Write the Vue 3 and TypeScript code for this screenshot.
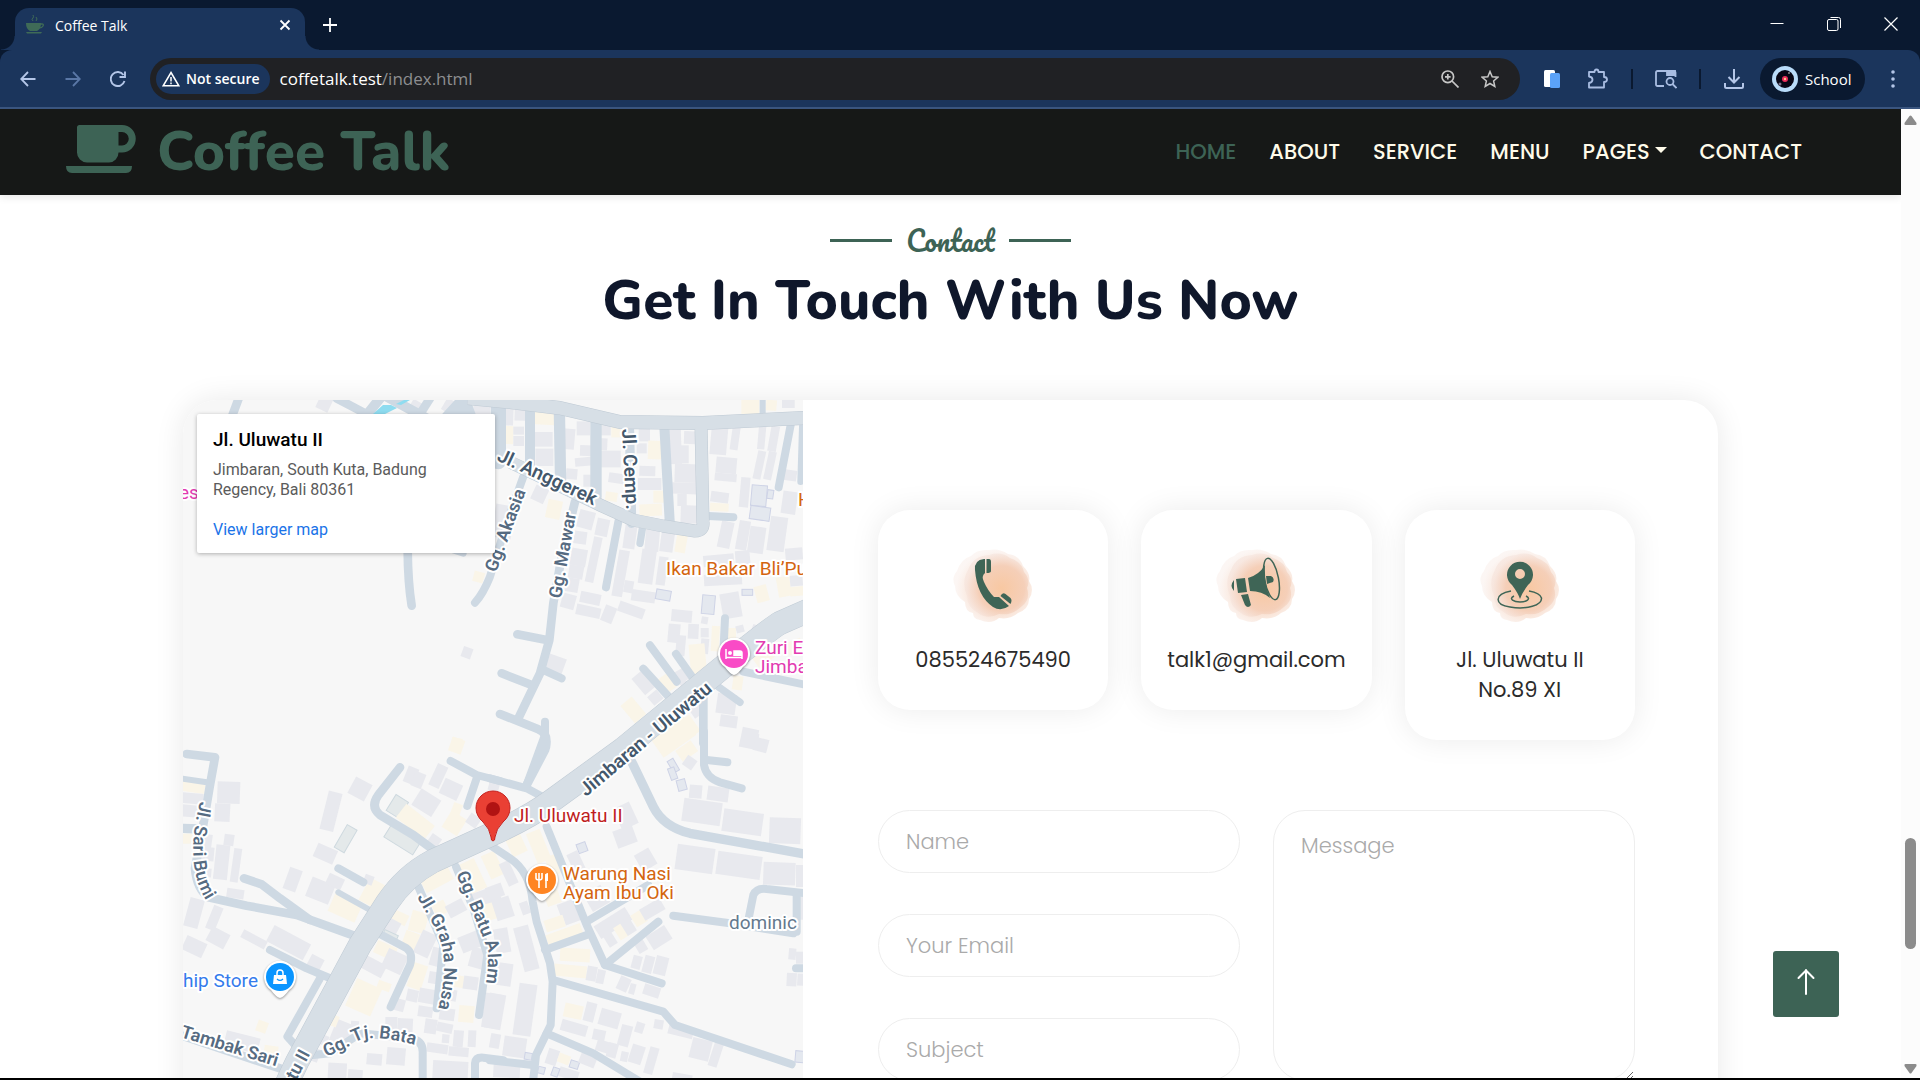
<script setup lang="ts">
import { ref } from 'vue'

type Building = [x: number, y: number, w: number, h: number, turn: number, kind?: 'shop' | 'pool' | 'park']
type Road = [d: string, width: number]
interface Tile { x: number; y: number; buildings: Building[]; roads: Road[] }

const navLinks = ['HOME', 'ABOUT', 'SERVICE', 'MENU', 'PAGES', 'CONTACT']
const contacts = [
  { icon: 'phone', text: '085524675490' },
  { icon: 'horn', text: 'talk1@gmail.com' },
  { icon: 'place', text: 'Jl. Uluwatu II No.89 XI' },
]
const form = ref({ name: '', email: '', subject: '', message: '' })

// Map geometry is kept per tile; three tile units make one map unit.
const tiles: Tile[] = [
  {
    x: -3, y: -10,
    buildings: [
      [415, 10, 40, 52, 25], [690, 34, 40, 34, 30], [880, 34, 50, 44, 0], [846, 772, 30, 32, 20], [880, 545, 32, 32, 15, 'shop'],
      [940, 345, 60, 100, 10], [815, 1044, 32, 20, 10, 'shop'], [790, 30, 40, 40, 30],
    ],
    roads: [
      ['M178 20L150 95', 26], ['M683 480Q684 580 695 647', 26], ['M470 25L565 75', 26], ['M560 75L600 25', 30], ['M620 20L740 85', 30],
      ['M750 25L715 80', 26], ['M800 90L850 35L870 90', 44], ['M820 480L850 490', 20],
    ],
  },
  {
    x: 307, y: -10,
    buildings: [
      [36, 48, 34, 58, 2], [74, 50, 32, 42, 2], [38, 108, 32, 54, 2, 'shop'], [70, 110, 32, 24, 0], [70, 138, 32, 30, 0],
      [124, 54, 72, 50, 3, 'shop'], [132, 126, 56, 44, 0], [136, 176, 54, 52, 0], [216, 116, 38, 62, 5], [260, 94, 40, 42, 0],
      [270, 166, 42, 32, 2], [255, 202, 56, 26, -5], [228, 236, 34, 32, 5], [280, 254, 28, 36, 0], [322, 100, 40, 36, 0],
      [364, 106, 40, 36, 0, 'shop'], [322, 145, 30, 36, 3], [332, 182, 60, 50, 0], [356, 250, 50, 30, 8], [346, 306, 36, 28, 8, 'shop'],
      [446, 106, 34, 48, 0], [474, 152, 40, 56, 2, 'shop'], [440, 160, 30, 30, 0], [448, 228, 48, 30, 2], [444, 264, 70, 36, 0],
      [490, 302, 40, 36, 0, 'shop'], [448, 342, 68, 36, -2, 'shop'], [538, 108, 36, 114, -2], [582, 124, 38, 38, 2], [570, 166, 26, 54, 0],
      [554, 222, 70, 56, 2], [546, 278, 76, 34, 2], [572, 346, 56, 54, 2], [562, 312, 28, 36, 0],
      [662, 102, 50, 92, 5], [724, 102, 24, 78, 8], [678, 202, 62, 48, 5], [674, 250, 66, 24, 5], [662, 306, 54, 32, 8],
      [660, 340, 56, 24, 3, 'shop'], [754, 30, 54, 50, 0, 'shop'], [828, 30, 32, 32, 5, 'shop'], [876, 30, 38, 24, 0],
      [804, 108, 22, 70, 5], [838, 108, 26, 76, 10], [796, 182, 24, 86, 12], [828, 184, 24, 86, 12], [750, 262, 28, 90, 5],
      [784, 286, 46, 62, 5, 'pool'], [780, 350, 60, 40, 8, 'pool'], [832, 300, 18, 26, 8, 'pool'], [876, 304, 44, 68, 8], [880, 240, 40, 32, 8],
      [836, 380, 52, 104, 8], [688, 394, 38, 80, 12], [742, 392, 34, 88, 10], [776, 410, 48, 80, 8], [886, 474, 52, 36, -5],
      [128, 290, 42, 46, 25], [170, 330, 44, 56, 12, 'shop'], [264, 362, 48, 54, 15], [318, 386, 38, 52, 12], [252, 424, 38, 38, 8],
      [242, 476, 48, 52, 10], [236, 526, 44, 40, 10], [298, 440, 26, 138, 12], [226, 564, 40, 42, 10], [214, 612, 42, 44, 15],
      [270, 608, 62, 34, 12], [258, 648, 74, 32, 12], [338, 648, 36, 50, 22], [384, 644, 80, 32, 20], [402, 402, 36, 74, 8],
      [376, 480, 32, 140, 10], [402, 572, 28, 36, 10], [424, 602, 72, 34, 8], [466, 408, 42, 76, 5], [450, 478, 44, 104, 8],
      [512, 416, 40, 70, 8], [502, 500, 28, 86, 8], [558, 424, 32, 64, 10, 'shop'], [640, 494, 92, 34, -5], [642, 552, 114, 34, -3],
      [736, 482, 44, 44, -5], [498, 600, 44, 30, 10, 'pool'], [636, 616, 38, 56, 5, 'pool'], [756, 598, 32, 18, 0, 'pool'], [694, 608, 58, 76, -10],
      [796, 586, 38, 50, -15, 'shop'], [862, 560, 40, 60, -10, 'shop'], [900, 556, 38, 32, -5], [900, 590, 40, 28, -5, 'shop'],
      [544, 660, 62, 36, 5], [534, 702, 36, 56, 5], [594, 702, 32, 44, 3], [558, 736, 28, 62, 5], [634, 680, 20, 22, 10],
      [632, 714, 24, 28, 0], [632, 746, 24, 46, 5], [664, 708, 24, 76, 3, 'shop'], [710, 714, 28, 50, 0, 'shop'], [738, 706, 24, 22, -15],
      [784, 708, 40, 30, 20], [600, 762, 48, 104, -5, 'shop'], [440, 846, 42, 64, -40], [478, 906, 36, 34, -40], [514, 854, 36, 50, -35, 'shop'],
      [556, 838, 38, 38, -30], [572, 872, 22, 22, -35], [408, 926, 44, 68, -40, 'shop'], [170, 798, 54, 48, 20], [728, 858, 30, 42, 8, 'shop'],
      [680, 912, 58, 60, 8], [690, 976, 52, 36, 8], [560, 985, 60, 60, -35, 'shop'], [790, 780, 60, 40, -35, 'shop'], [756, 1028, 50, 30, 10],
      [890, 750, 48, 40, -20, 'shop'], [602, 944, 32, 36, -35],
    ],
    roads: [
      ['M25 20V215', 46], ['M120 45V235', 30], ['M208 55L212 290', 34], ['M318 85V320', 34], ['M418 100L425 400', 28],
      ['M523 110L540 410', 30], ['M100 260L50 400L0 560Q-20 610 -45 638', 24], ['M255 335L215 500L190 640L178 750L150 850L85 985', 26],
      ['M82 733L170 750', 26], ['M35 850L125 885', 26], ['M160 840L215 865', 24], ['M30 972L145 1018Q175 1028 168 1070L165 1080L110 1185', 26],
      ['M385 395L348 592', 24], ['M458 410L450 460', 22], ['M655 378L730 382', 24], ['M902 105L866 292', 24], ['M937 110L932 275', 20], ['M818 30V75', 18],
      ['M705 685L700 790', 24], ['M480 766L560 875', 24], ['M460 836L545 930', 24], ['M558 792L620 880', 24], ['M760 845L950 885', 24],
      ['M640 920V1060', 26], ['M685 890L750 937', 22],
    ],
  },
  {
    x: -3, y: 335,
    buildings: [
      [0, 142, 75, 30, 8, 'shop'], [0, 174, 70, 32, 5], [0, 210, 60, 36, 5], [0, 296, 40, 30, 0, 'shop'], [112, 140, 68, 66, 2],
      [104, 206, 46, 54, 3], [70, 298, 26, 40, 8], [60, 336, 42, 42, 5], [104, 330, 42, 104, 6], [132, 298, 30, 34, 8], [156, 340, 24, 102, 8],
      [66, 400, 28, 26, 5], [140, 462, 52, 28, 8], [20, 490, 44, 88, 15], [88, 512, 30, 74, 22], [84, 584, 60, 48, 28], [10, 612, 66, 46, 25],
      [432, 170, 42, 118, 14], [512, 134, 56, 56, 28], [480, 272, 34, 78, 30, 'park'], [404, 334, 64, 44, 24], [318, 400, 40, 68, 20],
      [384, 436, 74, 62, 22], [440, 422, 50, 36, 25], [452, 484, 88, 64, 24, 'shop'], [550, 436, 56, 76, 28, 'shop'], [552, 420, 28, 28, 20],
      [676, 96, 34, 50, 22], [698, 112, 34, 46, 22], [758, 88, 34, 70, 25], [784, 138, 58, 50, 25], [704, 174, 70, 58, 32], [810, 10, 40, 44, 20, 'shop'],
      [630, 186, 44, 56, 32, 'park'], [616, 290, 102, 46, 32, 'park'], [652, 234, 108, 52, 38, 'shop'], [796, 236, 54, 58, 32, 'shop'], [816, 205, 28, 36, 20, 'shop'],
      [744, 300, 34, 40, 35], [862, 240, 36, 34, 35], [926, 138, 32, 30, 15], [182, 600, 80, 26, 28], [264, 596, 124, 54, 28], [386, 664, 42, 36, 28],
      [724, 408, 92, 48, -28, 'shop'], [850, 376, 54, 96, -25, 'shop'], [916, 352, 44, 76, -25, 'shop'], [622, 528, 62, 34, 25, 'shop'], [608, 552, 50, 40, 28],
      [608, 592, 44, 24, 25, 'park'], [584, 626, 64, 40, 24, 'shop'], [546, 674, 70, 42, 28], [612, 650, 64, 60, 25], [510, 742, 82, 90, 24, 'shop'],
      [592, 740, 40, 26, 20, 'shop'], [690, 530, 50, 62, 15, 'shop'], [670, 590, 44, 50, 20, 'shop'], [712, 590, 48, 74, 25], [690, 686, 44, 76, 18, 'shop'],
      [760, 500, 40, 40, -25, 'shop'], [800, 500, 56, 40, -28], [870, 464, 90, 46, -20], [900, 506, 50, 50, -15, 'shop'], [838, 592, 80, 50, -22],
      [870, 640, 50, 60, 15], [752, 640, 48, 56, 15], [746, 712, 50, 36, 10], [806, 720, 46, 36, 10, 'shop'], [850, 724, 44, 40, 8], [680, 764, 34, 36, 12],
      [716, 762, 58, 44, 10], [780, 762, 50, 34, 10], [642, 792, 32, 36, 15], [714, 814, 44, 32, 8], [836, 812, 46, 50, 5, 'shop'], [778, 820, 46, 36, 8],
      [920, 776, 50, 106, 10], [616, 846, 36, 44, 0], [652, 850, 46, 62, 3], [734, 852, 36, 44, 8], [770, 864, 48, 28, 12], [820, 886, 30, 50, 5],
      [864, 886, 24, 50, 3], [786, 898, 22, 26, 5], [740, 926, 64, 28, 8], [806, 936, 60, 28, 5], [758, 978, 106, 60, 3], [456, 860, 60, 74, 22],
      [416, 900, 28, 30, 22], [448, 840, 26, 34, 22, 'shop'], [392, 940, 26, 40, 20], [560, 956, 46, 34, 5], [620, 938, 56, 52, 5], [444, 984, 56, 50, 3],
      [504, 1004, 44, 28, 5], [134, 898, 104, 46, 14], [230, 858, 32, 34, 20, 'shop'], [252, 932, 42, 32, 8, 'shop'], [512, 858, 24, 36, 5],
    ],
    roads: [
      ['M20 57L105 67L90 150L68 280L45 400Q50 460 85 487L200 512L350 540L420 565L530 605', 26], ['M0 130L80 142', 18], ['M0 280L60 282', 28],
      ['M192 430L245 448L300 490L390 555', 26], ['M660 97L595 180Q570 215 600 240L700 300L770 352', 26], ['M475 400L550 442', 24], ['M475 472L570 525', 18],
      ['M270 645L380 700L470 738', 24], ['M420 730L322 905L345 930', 24], ['M595 595L680 640Q700 655 690 690L632 816', 24],
      ['M812 78L890 120L960 138', 24], ['M890 130L862 213', 24], ['M828 395L880 520L922 660L897 840', 24], ['M715 455L790 630L770 820', 24],
      ['M0 900L300 1000', 26], ['M400 960L450 955L540 895L690 910Q728 915 728 950V1050', 24], ['M885 1050V985Q887 966 910 968L970 976', 24],
    ],
  },
  {
    x: 307, y: 335,
    buildings: [
      [490, -30, 120, 70, -35, 'shop'], [562, 28, 56, 40, -35, 'shop'], [582, 66, 34, 34, 35], [540, 72, 20, 40, -30, 'pool'], [538, 98, 20, 36, -20, 'pool'],
      [562, 134, 26, 32, -15, 'pool'], [752, -20, 50, 60, 12], [792, 10, 42, 40, 15], [598, 150, 38, 40, 5], [652, 156, 64, 42, 8], [578, 196, 116, 70, 8],
      [698, 228, 120, 68, 8], [838, 248, 94, 78, 2], [558, 334, 114, 76, 8], [680, 356, 134, 70, 8], [820, 382, 96, 68, 2], [918, 390, 30, 66, 0],
      [380, 208, 54, 70, -25], [374, 278, 62, 54, -20], [262, 324, 28, 28, -20, 'pool'], [442, 346, 50, 56, -30], [240, 350, 36, 60, -25],
      [54, 296, 48, 64, -25, 'shop'], [124, 286, 44, 96, -22, 'shop'], [172, 360, 38, 60, -20, 'shop'], [0, 366, 24, 60, -20, 'shop'], [40, 378, 32, 74, -25],
      [-10, 450, 50, 40, -20], [12, 488, 54, 64, -18], [92, 500, 26, 38, -20], [166, 470, 44, 40, -20, 'shop'], [204, 500, 52, 34, -20], [220, 528, 50, 36, -20],
      [290, 460, 60, 60, -30], [314, 542, 110, 44, -32], [164, 548, 60, 36, -18, 'shop'], [168, 582, 110, 34, -20, 'shop'], [210, 640, 90, 40, 3, 'shop'],
      [378, 566, 38, 44, -32, 'shop'], [428, 530, 38, 40, -32, 'shop'], [346, 590, 28, 44, -32], [398, 548, 32, 50, -32], [452, 504, 70, 38, -30],
      [474, 584, 66, 48, -32], [438, 616, 30, 36, -30], [426, 662, 28, 40, 15], [460, 662, 30, 52, 15], [494, 664, 38, 56, 14],
      [192, 690, 98, 36, 5, 'shop'], [290, 694, 30, 44, 10], [320, 704, 24, 42, 12], [384, 726, 34, 42, 25], [418, 746, 18, 32, 15], [460, 752, 50, 32, 18],
      [86, 572, 46, 136, -15], [14, 580, 44, 74, -10], [12, 684, 54, 68, 8], [78, 746, 54, 156, 8], [-20, 776, 56, 104, 8], [0, 896, 30, 44, 10],
      [40, 906, 68, 60, 8], [104, 954, 22, 20, 10, 'pool'], [10, 988, 80, 40, 3], [222, 808, 56, 42, 12, 'shop'], [284, 802, 32, 58, 14],
      [328, 826, 62, 50, 16], [212, 862, 80, 34, 16], [308, 884, 38, 32, 12], [318, 920, 60, 34, 18], [388, 870, 34, 64, 15], [352, 924, 30, 44, 15],
      [436, 862, 26, 32, 18], [492, 854, 28, 28, 10], [420, 930, 40, 56, 18], [470, 936, 28, 82, 16], [392, 950, 22, 30, 12], [534, 878, 76, 26, 14],
      [602, 912, 60, 62, 14], [664, 918, 28, 78, 18], [170, 942, 34, 48, 18], [204, 958, 36, 28, 20, 'shop'], [240, 978, 26, 22, 18, 'pool'], [268, 960, 50, 32, 22],
      [206, 1002, 60, 30, 18], [144, 996, 20, 20, 15, 'pool'], [186, 998, 20, 26, 20, 'pool'], [546, 1016, 60, 30, 10], [918, 484, 22, 70, 0],
      [896, 640, 22, 34, 5], [918, 650, 30, 36, 0], [890, 714, 30, 40, 3], [922, 716, 24, 36, 3], [916, 948, 26, 34, 5, 'pool'],
    ],
    roads: [
      ['M0 130L110 160L185 200', 24], ['M165 -40V0L110 150', 24], ['M0 330L60 370Q120 410 128 500L140 560L180 685L188 740L182 870L138 960L128 1050', 24],
      ['M170 275L290 570L345 690L515 745', 24], ['M165 645L290 600', 24], ['M290 560L475 450', 24], ['M345 690L505 560', 24],
      ['M190 735L520 830L555 870L905 988', 24], ['M170 895L310 955L450 1040', 24], ['M425 80L490 215Q520 275 600 295L950 358', 28],
      ['M642 -10V90Q648 128 690 142L755 160', 24], ['M650 75L712 82', 24], ['M550 542L720 565L910 595', 24], ['M772 570L790 480Q800 458 830 462L950 475', 24],
      ['M920 480V590', 24], ['M918 700H950', 24], ['M0 976L128 990', 24],
    ],
  },
]

const mainStreets: Road[] = [
  ['M285 -2L327 2L377 8L437 22L520 23L622 18', 13],
  ['M518 24L520 122Q521 131 512 131L480 126L450 120L417 105L327 62', 12],
  ['M640 204L597 223Q585 230 524 280L440 349L367 402Q345 418 307 435L250 461Q222 476 204 503L177 545L114 662L96 700', 23],
]
</script>

<template>
  <div class="window">
    <header class="chrome">
      <div class="titlebar">
        <div class="tab">
          <svg class="favicon" viewBox="0 0 20 20"><g fill="none" stroke="#3f6b57"><path d="M8 6q-2-2 0-3q1-1 0-3M11 6q2-2 0-4" /><path d="M15 9h2q2 0 1 2t-4 2" stroke-width="1.3" /></g><path d="M1 8h15q0 6-4 8H5q-4-2-4-8z" fill="#3f6b57" /><path d="M1 17h16l-1 1.500H2z" fill="#3f6b57" /></svg>
          <span class="tab-title">Coffee Talk</span>
          <button class="plain" aria-label="Close tab"><svg width="12" height="12" viewBox="0 0 12 12"><path d="M1.500 1.500l9 9m0-9l-9 9" stroke="#fff" stroke-width="1.800" /></svg></button>
        </div>
        <button class="plain new-tab" aria-label="New tab"><svg width="14" height="14" viewBox="0 0 14 14"><path d="M7 0v14M0 7h14" stroke="#fff" stroke-width="1.800" /></svg></button>
        <div class="window-buttons">
          <button class="plain" aria-label="Minimize"><svg width="14" height="14" viewBox="0 0 14 14"><path d="M.5 6.500h13" stroke="#fff" /></svg></button>
          <button class="plain" aria-label="Restore"><svg width="14" height="14" viewBox="0 0 14 14" fill="none" stroke="#fff"><rect x=".5" y="2.500" width="10.500" height="11" rx="1.500" /><path d="M3.500.5h8q2 0 2 2v8.500" /></svg></button>
          <button class="plain" aria-label="Close"><svg width="14" height="14" viewBox="0 0 14 14"><path d="M.5.5l13 13m0-13l-13 13" stroke="#fff" stroke-width="1.200" /></svg></button>
        </div>
      </div>
      <div class="toolbar">
        <div class="history">
          <button class="plain" aria-label="Back"><svg width="16" height="16" viewBox="0 0 16 16" fill="none" stroke="#b4c6e8" stroke-width="1.800"><path d="M15.500 8H1.500M8 1L1.200 8L8 15" /></svg></button>
          <button class="plain" aria-label="Forward"><svg width="16" height="16" viewBox="0 0 16 16" fill="none" stroke="#5a77a6" stroke-width="1.800"><path d="M.5 8h14M8 1l6.800 7L8 15" /></svg></button>
          <button class="plain" aria-label="Reload"><svg width="16" height="16" viewBox="0 0 16 16" fill="none" stroke="#b4c6e8" stroke-width="1.900"><path d="M14.500 10A7 7 0 1 1 13.500 4M15 .5V6H9.500" /></svg></button>
        </div>
        <div class="address">
          <span class="not-secure">
            <svg width="18" height="16" viewBox="0 0 18 16" fill="none" stroke="#fff" stroke-width="1.500"><path d="M9 1.500L16.800 14.800H1.200z" /><path d="M9 6v4.500M9 11.600v1.600" /></svg>
            Not secure
          </span>
          <span class="url">coffetalk.test<span>/index.html</span></span>
          <svg class="zoom-glass" width="18" height="18" viewBox="0 0 18 18" fill="none" stroke="#c7c7c7" stroke-width="1.700"><circle cx="6.800" cy="6.800" r="5.800" /><path d="M11 11l6.500 6.500M6.800 4v5.600M4 6.800h5.600" /></svg>
          <svg width="18" height="18" viewBox="0 0 18 18" fill="none" stroke="#c7c7c7" stroke-width="1.500"><path d="M9 1.500l2.200 5.200 5.600.5-4.200 3.700 1.200 5.500L9 13.500l-4.800 2.900 1.200-5.500L1.200 7.200l5.600-.5z" /></svg>
        </div>
        <svg class="ext" width="16" height="20" viewBox="0 0 16 20"><rect x="0" y="1" width="11" height="17" rx="1.500" fill="#fff" /><rect x="6" y="4" width="10" height="15" rx="1.500" fill="#5ba2f8" /></svg>
        <svg class="puzzle" width="22" height="22" viewBox="0 0 22 22" fill="none" stroke="#a9bde2" stroke-width="1.800"><path d="M2 4h5.500q0-2.500 2-2.500t2 2.500H17v5q3 0 3 2.500T17 14v5.500H2V15q3.500-.5 3.500-3.300T2 8.500z" stroke-linejoin="round" /></svg>
        <i class="bar"></i>
        <svg class="lens" width="22" height="20" viewBox="0 0 22 20" fill="none" stroke="#a9bde2" stroke-width="1.800"><path d="M9 17H2.500q-1.500 0-1.500-1.500v-12Q1 2 2.500 2H19q1.500 0 1.500 1.500V8" /><path d="M12 2h8v4h-8z" fill="#a9bde2" /><circle cx="15" cy="12.500" r="3.500" /><path d="M17.500 15l4 4" /></svg>
        <i class="bar"></i>
        <svg class="download" width="20" height="20" viewBox="0 0 20 20" fill="none" stroke="#b4c6e8" stroke-width="2"><path d="M10 0v13M4.500 8L10 13.500 15.500 8M1 14v3.500Q1 19 2.500 19h15q1.500 0 1.500-1.500V14" /></svg>
        <button class="profile">
          <svg width="26" height="26" viewBox="0 0 26 26"><circle cx="13" cy="13" r="13" fill="#b9dcfa" /><circle cx="13" cy="13" r="9" fill="#080716" /><circle cx="8" cy="18" r="1.500" fill="#77728a" /><circle cx="17" cy="7" r="1" fill="#888" /><circle cx="13" cy="13" r="3" fill="#e92b59" /><circle cx="13" cy="13" r="1.200" fill="#ffc48b" /></svg>
          School
        </button>
        <button class="plain menu" aria-label="Menu"><svg width="4" height="18" viewBox="0 0 4 18" fill="#b4c6e8"><circle cx="2" cy="2" r="1.800" /><circle cx="2" cy="9" r="1.800" /><circle cx="2" cy="16" r="1.800" /></svg></button>
      </div>
    </header>

    <div class="viewport">
      <main class="site">
        <nav class="navbar">
          <a class="brand" href="#">
            <svg width="70" height="50" viewBox="0 0 70 50"><path d="M11 3.500Q11 1 13.500 1H56a13.500 13.500 0 0 1 0 27.500h-3.500A10 10 0 0 1 43 38.500H21a10 10 0 0 1-10-10zM52.500 8v13.500H56a6.700 6.700 0 0 0 0-13.500z" fill="#3d6355" fill-rule="evenodd" /><path d="M0 42h66q0 7-6 7H6q-6 0-6-7z" fill="#3d6355" /></svg>
            Coffee Talk
          </a>
          <div class="links">
            <a v-for="(link, i) in navLinks" :key="link" href="#" :class="{ active: i === 0 }">{{ link }}<i v-if="link === 'PAGES'" class="caret"></i></a>
          </div>
        </nav>

        <section class="contact">
          <p class="eyebrow">Contact</p>
          <h1>Get In Touch With Us Now</h1>

          <div class="panel">
            <div class="map">
              <svg class="map-art" viewBox="0 0 620 792" preserveAspectRatio="xMinYMin slice">
                <rect width="620" height="792" fill="#f7f7f7" />
                <g v-for="(tile, t) in tiles" :key="t" :transform="`translate(${tile.x} ${tile.y}) scale(.33333)`">
                  <rect v-for="(b, i) in tile.buildings" :key="i" :x="b[0]" :y="b[1]" :width="b[2]" :height="b[3]" :transform="`rotate(${b[4]} ${b[0] + b[2] / 2} ${b[1] + b[3] / 2})`" :class="b[5] || 'house'" />
                </g>
                <g v-for="(tile, t) in tiles" :key="'r' + t" :transform="`translate(${tile.x} ${tile.y}) scale(.33333)`" class="lane">
                  <path v-for="(r, i) in tile.roads" :key="i" :d="r[0]" :stroke-width="r[1]" />
                </g>
                <path d="M190 14l10-9h8l6 3-12 6zM213 4l8-4h6l-9 5z" fill="#8edcf0" />
                <path v-for="(r, i) in mainStreets" :key="'e' + i" :d="r[0]" :stroke-width="r[1] + 1" class="street-edge" />
                <path v-for="(r, i) in mainStreets" :key="'s' + i" :d="r[0]" :stroke-width="r[1]" class="street" />

                <defs>
                  <path id="sari" d="M17 401Q-2 476 32 512" />
                  <path id="graha" d="M234 497L252 528Q269 560 254 612" />
                  <path id="batu" d="M273 474L289 511L304 548Q307 566 301 592" />
                  <path id="bata" d="M143 657Q160 650 175 641Q190 633 240 647" />
                </defs>
                <g class="road-name">
                  <text class="wide" transform="translate(313 60) rotate(25)">Jl. Anggerek</text>
                  <text class="wide" transform="translate(439 29) rotate(87)">Jl. Cemp.</text>
                  <text transform="translate(313 173) rotate(-70)">Gg. Akasia</text>
                  <text transform="translate(378 199) rotate(-80)">Gg. Mawar</text>
                  <text class="wide" transform="translate(403 397) rotate(-40)">Jimbaran - Uluwatu</text>
                  <text transform="translate(-3 637) rotate(17)">Tambak Sari</text>
                  <text transform="translate(113 681) rotate(-62)">tu II</text>
                  <text><textPath href="#sari">Jl. Sari Bumi</textPath></text>
                  <text><textPath href="#graha">Jl. Graha Nusa</textPath></text>
                  <text><textPath href="#batu">Gg. Batu Alam</textPath></text>
                  <text><textPath href="#bata">Gg. Tj. Bata</textPath></text>
                </g>
                <g class="place-name">
                  <text x="483" y="175" fill="#d4650f">Ikan Bakar Bli’Pu</text>
                  <text x="615" y="106" fill="#d4650f">H</text>
                  <text x="572" y="254" fill="#e23bb1">Zuri E</text>
                  <text x="572" y="273" fill="#e23bb1">Jimba</text>
                  <text x="-4" y="99" fill="#e23bb1">es</text>
                  <text x="331" y="422" fill="#bf1e22">Jl. Uluwatu II</text>
                  <text x="380" y="480" fill="#d4650f">Warung Nasi</text>
                  <text x="380" y="499" fill="#d4650f">Ayam Ibu Oki</text>
                  <text x="546" y="529" fill="#64798e">dominic</text>
                  <text x="0" y="587" fill="#347bec">hip Store</text>
                </g>
                <g transform="translate(551 254)"><path class="drop" d="M0 21Q-4 20-9 13A16 16 0 1 1 9 13Q4 20 0 21z" /><circle r="14" fill="#f94bc6" /><path d="M-8-5v10M-8 3.500H8M8 5v-6q0-2-2-2h-6v5" stroke="#fff" stroke-width="1.500" fill="none" /><path d="M0-3h6q2 0 2 2v3H0z" fill="#fff" /><circle cx="-4" cy="-1" r="2" fill="#fff" /></g>
                <g transform="translate(359 480)"><path class="drop" d="M0 21Q-4 20-9 13A16 16 0 1 1 9 13Q4 20 0 21z" /><circle r="14" fill="#ff8522" /><path d="M-3-7V8M-6-7v5q0 2 3 2t3-2v-5M4 8V-6" stroke="#fff" stroke-width="1.600" fill="none" /><path d="M6 1H3v-4q0-4 3-4z" fill="#fff" /></g>
                <g transform="translate(97 577)"><path class="drop" d="M0 21Q-4 20-9 13A16 16 0 1 1 9 13Q4 20 0 21z" /><circle r="14" fill="#0a95ff" /><path d="M-6-2H6L7 7H-7z" fill="#fff" /><path d="M-3-1v-3a3 3 0 0 1 6 0v3" stroke="#fff" stroke-width="1.500" fill="none" /><path d="M-3 2q3 3 6 0" stroke="#0a95ff" fill="none" stroke-width="1.200" /></g>
                <g transform="translate(310 409)"><path d="M0 32Q-2 32-2 28Q-3 20-10 13Q-17 7-17-1A17 17 0 0 1 17-1Q17 7 10 13Q3 20 2 28Q2 32 0 32z" fill="#ea4034" stroke="#c5221f" /><circle r="7" fill="#b11313" /></g>
              </svg>
              <div class="info">
                <strong>Jl. Uluwatu II</strong>
                <p>Jimbaran, South Kuta, Badung Regency, Bali 80361</p>
                <a href="#">View larger map</a>
              </div>
            </div>

            <div class="details">
              <div class="cards">
                <article v-for="c in contacts" :key="c.icon" class="card">
                  <svg width="80" height="80" viewBox="0 0 80 80">
                    <defs><radialGradient :id="'wash-' + c.icon" cx=".58" cy=".55" r=".55"><stop offset="0" stop-color="#f8c8a2" /><stop offset=".65" stop-color="#f5cfb8" /><stop offset="1" stop-color="#f5e2da" stop-opacity=".55" /></radialGradient></defs>
                    <path d="M4 25Q8 13 18 10Q24 3 36 4Q46 2 55 8Q66 9 70 20Q78 28 76 35Q82 44 76 53Q76 63 65 67Q57 74 46 72Q38 79 27 74Q20 73 20 67Q12 66 12 56Q2 50 2 40Q-2 32 4 25z" :fill="`url(#wash-${c.icon})`" opacity=".55" />
                    <path d="M15 24Q20 10 36 9Q48 5 57 12Q69 16 71 26Q78 34 74 42Q78 54 68 61Q58 70 46 68Q34 74 25 67Q14 61 14 50Q8 36 15 24z" :fill="`url(#wash-${c.icon})`" />
                    <g v-if="c.icon === 'phone'" fill="#3f6556"><path d="M22 24Q21 14 31 13H32V27Q28 30 31 36Q35 45 41 51Q44 51 46 51L56 60Q48 66 40 61Q24 50 22 24z" /><path d="M33.500 13H36q2 0 2 3v9q0 2-4.500 2zM47.500 50q2-4 5-2l5 4q2 2 0 6z" /></g>
                    <g v-else-if="c.icon === 'horn'" fill="#3f6556"><ellipse cx="55.500" cy="33" rx="7" ry="21" transform="rotate(-11 55.500 33)" fill="none" stroke="#3f6556" stroke-width="1.500" /><path d="M49 19Q43 29 32 32L34 45Q46 45 54 52Q48 37 49 19zM20 33l9-1 2 14-9 1zM18 34v11q-5-5 0-11zM25 49l7-1 3 11q-3 4-6 0zM50 30h5q4 2 2 6l-6 2z" /></g>
                    <g v-else><path d="M40 53Q38 47 32 39A13 13 0 1 1 48 39Q42 47 40 53zM40 23a5 5 0 1 0 0 10a5 5 0 1 0 0-10" fill="#3f6556" fill-rule="evenodd" /><path d="M31 45C14 48 14 59 30 61C47 64 62 59 61.500 52Q60 47 49 45M34 50C28 53 34 56 40 56S52 53 46 50" fill="none" stroke="#3f6556" stroke-width="1.500" /></g>
                  </svg>
                  <p>{{ c.text }}</p>
                </article>
              </div>
              <form class="form" @submit.prevent>
                <div class="fields">
                  <input v-model="form.name" type="text" placeholder="Name" aria-label="Name">
                  <input v-model="form.email" type="email" placeholder="Your Email" aria-label="Your Email">
                  <input v-model="form.subject" type="text" placeholder="Subject" aria-label="Subject">
                </div>
                <textarea v-model="form.message" placeholder="Message" aria-label="Message"></textarea>
              </form>
            </div>
          </div>
        </section>
        <button class="to-top" aria-label="Back to top"><svg width="18" height="26" viewBox="0 0 18 26" fill="none" stroke="#fff" stroke-width="2" stroke-linecap="round"><path d="M9 25V1M1.500 9L9 1.500 16.500 9" /></svg></button>
      </main>
      <div class="scrollbar">
        <svg width="13" height="11" viewBox="0 0 13 11"><path d="M5.500 1q1-1 2 0l5 7q.5 2-1 2h-10q-1.500 0-1-2z" fill="#8b8b8b" /></svg>
        <i class="track-above"></i><i class="thumb"></i><i class="track-below"></i>
        <svg width="13" height="11" viewBox="0 0 13 11"><path d="M5.500 10q1 1 2 0l5-7q.5-2-1-2h-10q-1.500 0-1 2z" fill="#8b8b8b" /></svg>
      </div>
    </div>
  </div>
</template>

<style>
body { margin: 0; }
</style>

<style scoped>
* { box-sizing: border-box; }
.window { display: flex; flex-direction: column; height: 100vh; overflow: hidden; border-bottom: 2px solid #000; font-family: "Poppins", "Inter", sans-serif; }
.plain { display: flex; align-items: center; justify-content: center; padding: 0; border: 0; background: none; }

.chrome { flex: none; background: #0a1930; color: #fff; font-family: "Segoe UI", "Open Sans", sans-serif; }
.titlebar { display: flex; height: 50px; padding-left: 15px; }
.tab { position: relative; display: flex; align-items: center; width: 290px; height: 42px; margin-top: 8px; padding: 0 14px 8px 10px; border-radius: 14px 14px 0 0; background: #1b355c; }
.tab::before, .tab::after { content: ""; position: absolute; bottom: 0; width: 14px; height: 14px; }
.tab::before { right: 100%; background: radial-gradient(circle at 0 0, transparent 13px, #1b355c 14px); }
.tab::after { left: 100%; background: radial-gradient(circle at 100% 0, transparent 13px, #1b355c 14px); }
.favicon { width: 20px; height: 20px; margin-right: 10px; }
.tab-title { flex: 1; font-size: 14px; }
.new-tab { margin-left: 18px; }
.window-buttons { display: flex; margin: 0 1px 2px auto; }
.window-buttons button { width: 57px; }
.toolbar { display: flex; align-items: center; height: 59px; padding: 0 25px 0 20px; border-bottom: 2px solid #3a557f; border-radius: 12px 12px 0 0; background: #1b355c; }
.history { display: flex; gap: 29px; width: 130px; }
.address { display: flex; flex: 1; align-items: center; height: 42px; padding: 0 21px 0 6px; border-radius: 21px; background: #202124; }
.not-secure { display: flex; align-items: center; gap: 6px; height: 30px; padding: 0 10px 0 6px; border-radius: 15px; background: #1b355c; font-size: 14px; font-weight: 600; white-space: nowrap; }
.url { flex: 1; margin-left: 10px; font-size: 17px; }
.url span { color: #8d8e90; }
.zoom-glass { margin-right: 22px; }
.ext { margin: 0 27px 0 24px; }
.bar { width: 2px; height: 20px; margin: 0 22px; background: #0a1930; }
.download { margin: 0 16px 0 1px; }
.profile { display: flex; align-items: center; gap: 7px; width: 105px; height: 42px; padding: 0 12px; border: 0; border-radius: 21px; background: #0a1930; color: #fff; font: 15px "Segoe UI", "Open Sans", sans-serif; }
.menu { margin-left: 26px; }

.viewport { display: flex; flex: 1; min-height: 0; }
.site { position: relative; flex: 1; min-width: 0; overflow: hidden; background: #fff; }
.navbar { display: flex; align-items: center; justify-content: space-between; height: 86px; padding: 0 99px 0 66px; background: #161817; box-shadow: 0 2px 8px rgba(0, 0, 0, .1); }
.brand { display: flex; align-items: center; gap: 21px; color: #3d6355; font: 800 55px/86px "Nunito", "Open Sans", sans-serif; text-decoration: none; }
.brand svg { margin-bottom: 6px; }
.links { display: flex; gap: 33px; }
.links a { display: flex; align-items: center; color: #fffbea; font-size: 21px; font-weight: 500; line-height: 30px; text-decoration: none; }
.links a.active { color: #3d6355; }
.caret { margin: -4px 0 0 5px; border: 6px solid transparent; border-top-color: #fffbea; border-bottom: 0; }

.contact { width: 81%; max-width: 1535px; margin: 0 auto; padding-top: 23px; }
.eyebrow { display: flex; align-items: center; justify-content: center; gap: 14px; height: 44px; margin: 0; color: #3d6355; font: 27px "Pacifico", "Liberation Serif", serif; }
.eyebrow::before, .eyebrow::after { content: ""; width: 62px; height: 3px; background: #3d6355; }
h1 { margin: 0; color: #0f172b; font: 800 55px/78px "Nunito", "Open Sans", sans-serif; text-align: center; }
.panel { display: grid; grid-template-columns: 620fr 915fr; margin-top: 60px; overflow: hidden; border-radius: 34px; background: #fff; box-shadow: 0 0 30px rgba(0, 0, 0, .09); }
.map { position: relative; overflow: hidden; }
.map-art { display: block; width: 100%; height: 100%; }
.house { fill: #e8e9ee; }
.shop { fill: #faf5e8; }
.pool { fill: #e4e8ef; stroke: #ced3e6; stroke-width: 3px; }
.park { fill: #e4e9ea; stroke: #ced9df; stroke-width: 3px; }
.lane path { fill: none; stroke: #ced9e3; stroke-linecap: round; stroke-linejoin: round; }
.street, .street-edge { fill: none; stroke: #d7dfe6; stroke-linejoin: round; }
.street-edge { stroke: #bfcad4; }
.road-name text, .place-name text { stroke: #fff; stroke-width: 4px; stroke-linejoin: round; paint-order: stroke; font-family: "Roboto", sans-serif; }
.road-name text { fill: #566b81; font-size: 18px; font-weight: 600; }
.road-name .wide { fill: #44586c; font-size: 19px; }
.place-name text { font-size: 19px; }
.drop { fill: #fff; filter: drop-shadow(0 1px 1px rgba(0, 0, 0, .4)); }
.info { position: absolute; top: 14px; left: 14px; width: 298px; padding: 14px 16px 13px; border-radius: 2px; background: #fff; box-shadow: 0 1px 4px rgba(0, 0, 0, .3); color: #5b5b5b; font: 16px/20px "Roboto", sans-serif; }
.info strong { display: block; color: #000; font-size: 19px; font-weight: 500; line-height: 24px; }
.info p { margin: 8px 40px 20px 0; }
.info a { color: #1a73e8; text-decoration: none; }

.details { padding: 110px 83px 110px 75px; }
.cards { display: grid; grid-template-columns: repeat(3, 1fr); align-items: start; gap: 33px; height: 300px; }
.card { padding: 36px 24px 35px; border-radius: 32px; background: #fff; box-shadow: 0 0 30px rgba(0, 0, 0, .08); text-align: center; }
.card svg { display: block; margin: 0 auto; }
.card p { margin: 19px 0 0; color: #2b2b2b; font-size: 21px; line-height: 30px; }
.form { display: grid; grid-template-columns: 1fr 1fr; gap: 33px; }
.fields { display: flex; flex-direction: column; gap: 41px; }
input, textarea { width: 100%; margin: 0; padding: 0 27px; border: 1px solid #eee; border-radius: 32px; background: #fff; font: 300 21px "Poppins", "Inter", sans-serif; }
input { height: 63px; }
textarea { padding-top: 19px; }
input::placeholder, textarea::placeholder { color: #aaa; }
.to-top { position: absolute; right: 62px; bottom: 61px; display: flex; align-items: center; justify-content: center; width: 66px; height: 66px; padding: 0 0 4px; border: 0; border-radius: 3px; background: #3d6355; }

.scrollbar { display: flex; flex: none; flex-direction: column; align-items: center; width: 19px; padding: 6px 0 4px; background: #fcfcfc; }
.track-above { flex: 713; }
.thumb { flex: 111; width: 11px; border-radius: 6px; background: #8b8b8b; }
.track-below { flex: 114; }
</style>
